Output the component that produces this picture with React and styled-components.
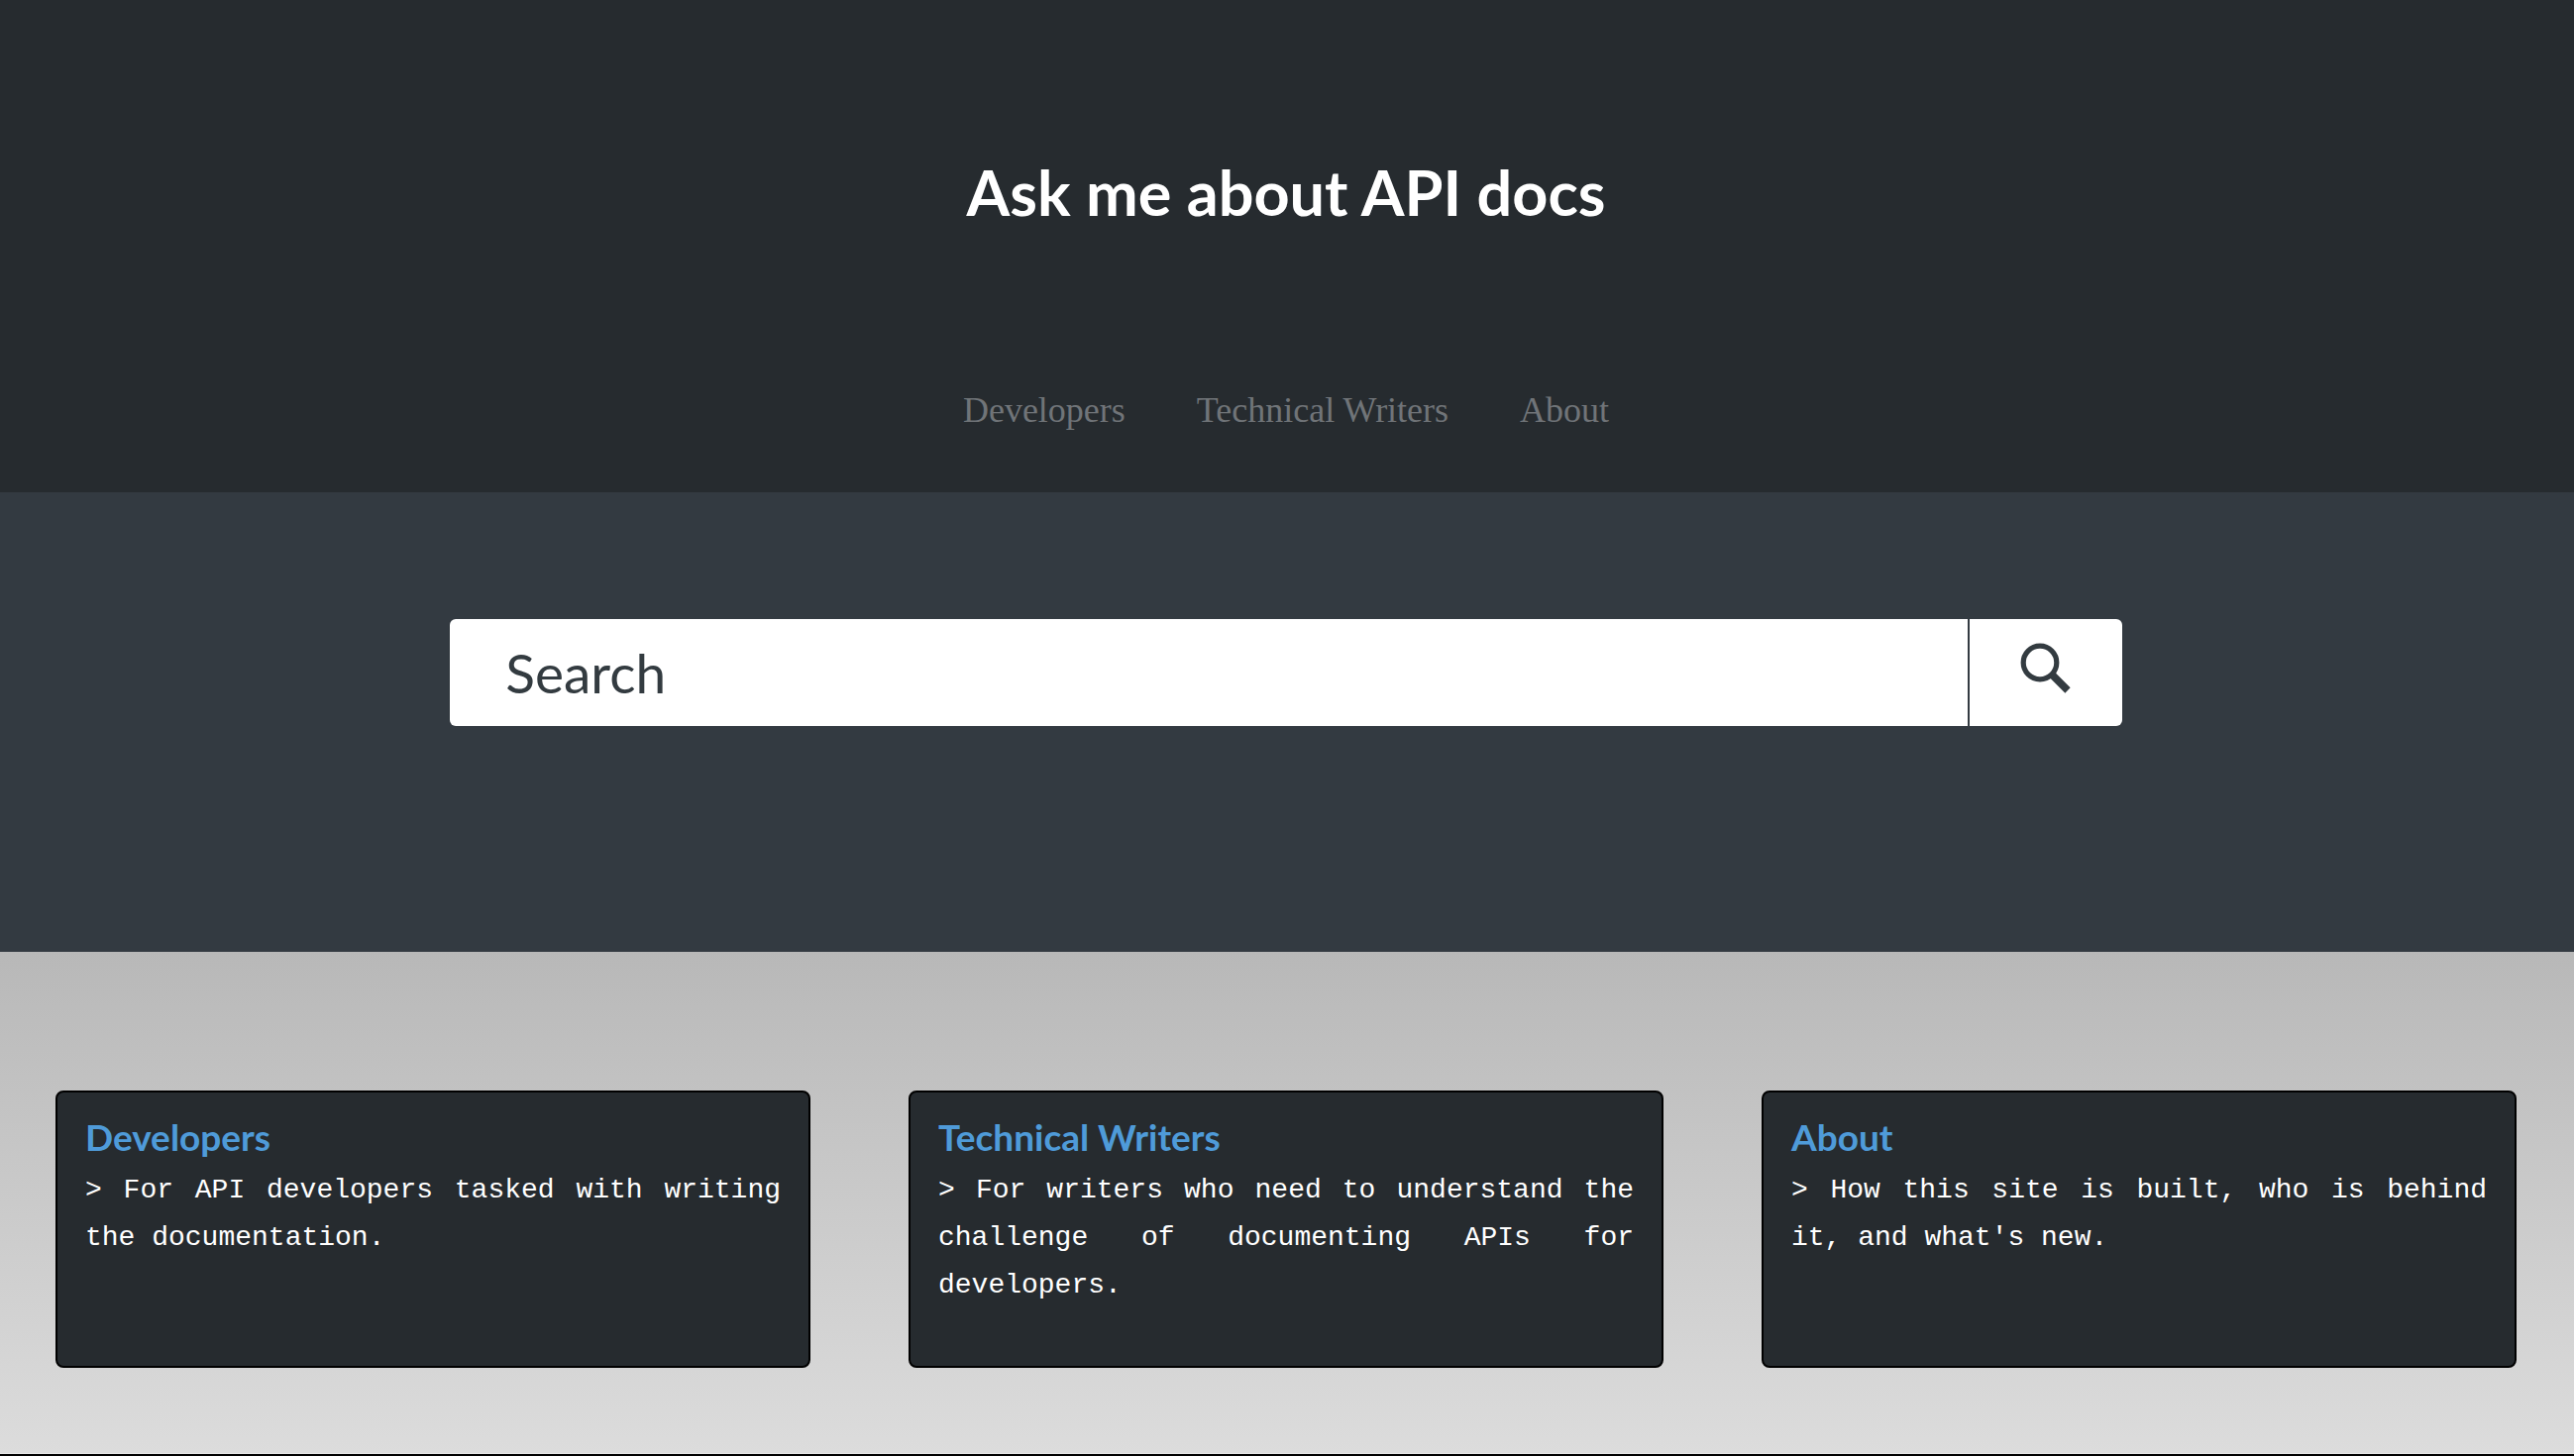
import React, {useState} from 'react';
import styled, {createGlobalStyle} from "styled-components";

const GlobalStyle = createGlobalStyle`
  * {
    box-sizing: border-box;
  }
  body {
    margin: 0;
    background: #000;
  }
`;

const sans = `Lato, sans-serif`;
const serif = `"Liberation Serif", serif`;
const mono = `"Liberation Mono", monospace`;

const Header = styled.header`
  display: flex;
  flex-direction: column;
  align-items: center;
  padding: 146px 2px 59px 0;
  background: #262b2f;
`;

const Title = styled.h1`
  margin: 0 0 148px;
  font: bold 63px/96px ${sans};
  color: #fff;
`;

const Nav = styled.nav`
  display: flex;
  gap: 72px;
`;

const NavLink = styled.a`
  font: 36px/48px ${serif};
  color: #707478;
  text-decoration: none;

  &:hover {
    color: #fff;
  }
`;

const SearchSection = styled.section`
  padding: 128px 2px 228px 0;
  background: #333a41;
`;

const SearchForm = styled.form`
  display: flex;
  width: 65%;
  height: 108px;
  margin: 0 auto;
`;

const SearchInput = styled.input`
  flex: 1;
  min-width: 0;
  padding: 0 56px;
  border: 0;
  border-radius: 6px 0 0 6px;
  outline: none;
  background: #fff;
  font: 55px/80px ${sans};
  color: #333b40;

  &::placeholder {
    color: #333b40;
    opacity: 1;
  }
`;

const SearchButton = styled.button`
  display: flex;
  justify-content: center;
  width: 156px;
  padding: 24px 0;
  border: 0;
  border-left: 2px solid #333a41;
  border-radius: 0 6px 6px 0;
  background: #fff;
  color: #333b40;
  cursor: pointer;
`;

const Cards = styled.main`
  display: grid;
  grid-template-columns: repeat(3, 1fr);
  gap: 99px;
  padding: 140px 58px 86px 56px;
  border-bottom: 1px solid #e6e6e6;
  background: linear-gradient(#b8b8b8, #dcdcdc);
`;

const Card = styled.article`
  min-height: 280px;
  padding: 17px 28px;
  border: 2px solid #000;
  border-radius: 8px;
  background: #262b2f;
`;

const CardTitle = styled.h2`
  margin: 0 0 2px;
  font: bold 37px/56px ${sans};
`;

const CardLink = styled.a`
  color: #4f9bd9;
  text-decoration: none;
`;

const CardText = styled.p`
  margin: 0;
  font: 28px/48px ${mono};
  color: #fff;
  text-align: justify;
`;

const Footer = styled.footer`
  height: 2px;
  background: #000;
`;

const SearchIcon = () => (
    <svg width="52" height="52" viewBox="0 0 52 52" fill="none" stroke="currentColor" aria-hidden="true">
        <circle cx="20" cy="20" r="16.800" strokeWidth="5.200"/>
        <path d="M30.500 30.500 L48 48" strokeWidth="7.500"/>
    </svg>
);

const sections = [
    {
        id: "developers",
        title: "Developers",
        text: "> For API developers tasked with writing the documentation.",
    },
    {
        id: "writers",
        title: "Technical Writers",
        text: "> For writers who need to understand the challenge of documenting APIs for developers.",
    },
    {
        id: "about",
        title: "About",
        text: "> How this site is built, who is behind it, and what's new.",
    },
];

function App() {
    const [query, setQuery] = useState("");
    return (
        <>
            <GlobalStyle/>
            <Header>
                <Title>Ask me about API docs</Title>
                <Nav>
                    {sections.map(({id, title}) => <NavLink key={id} href={`#${id}`}>{title}</NavLink>)}
                </Nav>
            </Header>
            <SearchSection>
                <SearchForm role="search" onSubmit={e => e.preventDefault()}>
                    <SearchInput
                        type="text"
                        aria-label="Search"
                        placeholder="Search"
                        value={query}
                        onChange={e => setQuery(e.target.value)}
                    />
                    <SearchButton type="submit" aria-label="Submit search"><SearchIcon/></SearchButton>
                </SearchForm>
            </SearchSection>
            <Cards>
                {sections.map(({id, title, text}) => (
                    <Card key={id} id={id}>
                        <CardTitle><CardLink href={`#${id}`}>{title}</CardLink></CardTitle>
                        <CardText>{text}</CardText>
                    </Card>
                ))}
            </Cards>
            <Footer/>
        </>
    );
}

export default App;
